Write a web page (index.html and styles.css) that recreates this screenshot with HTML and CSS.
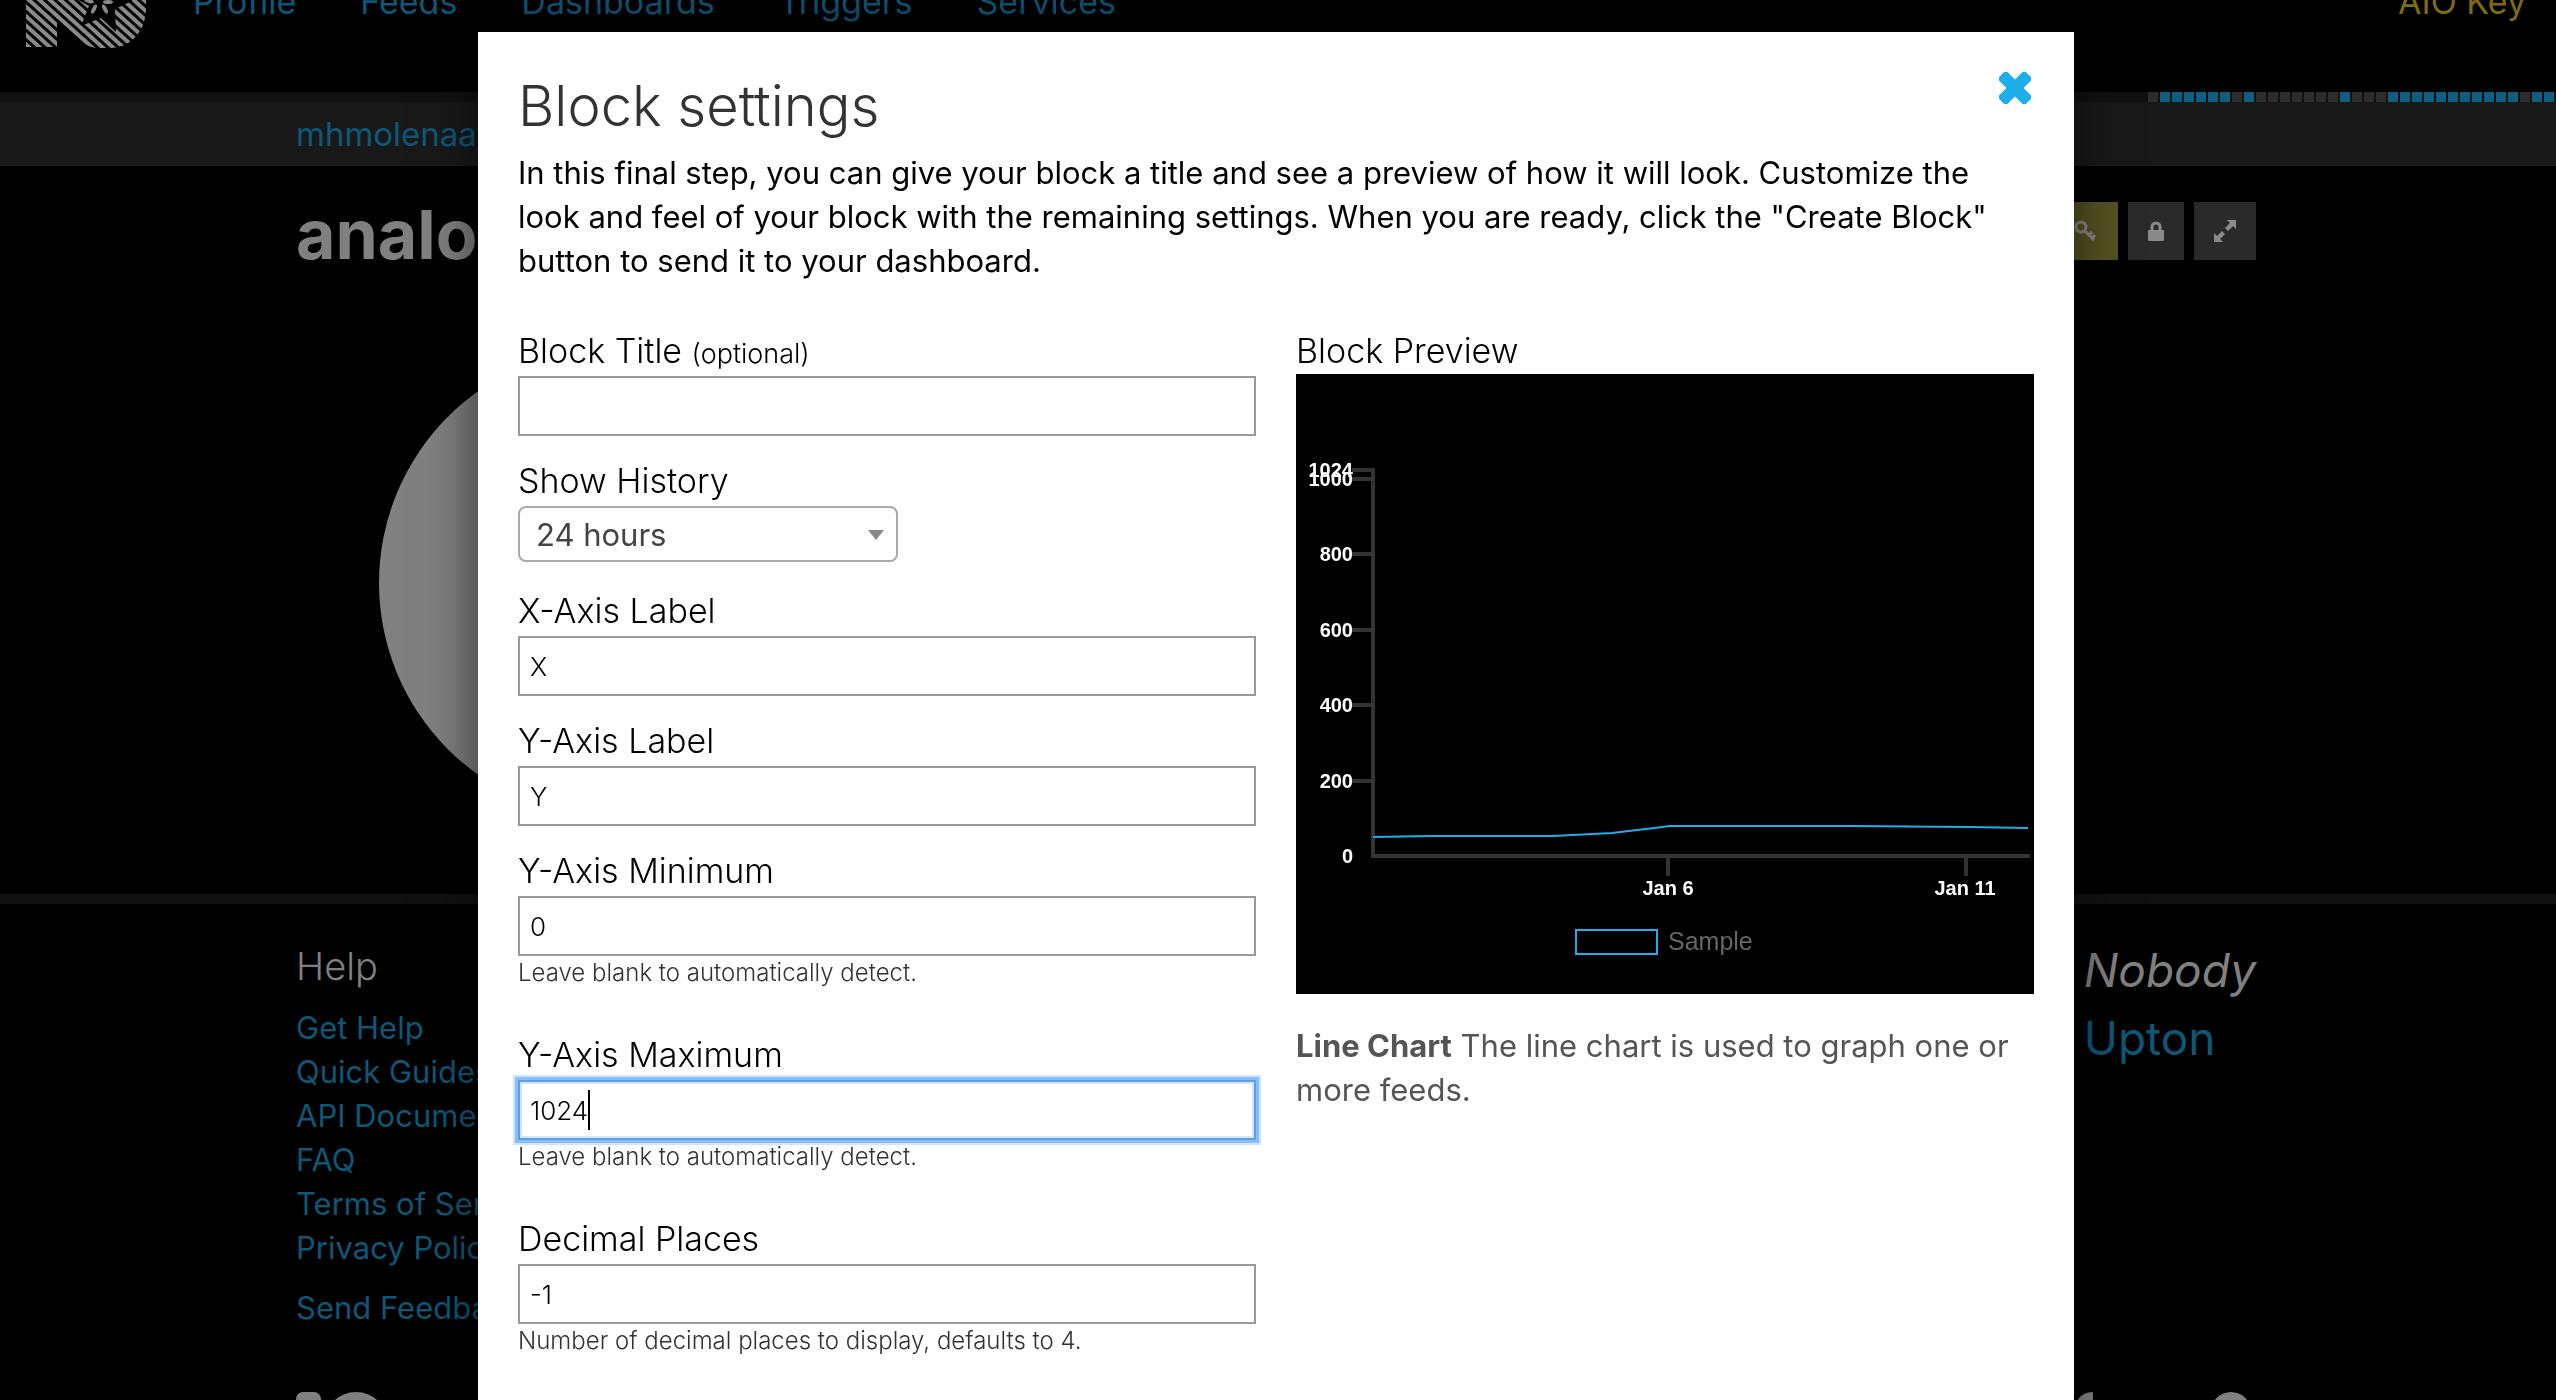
FILE: index.html
```html
<!DOCTYPE html>
<html lang="en">
<head>
<meta charset="utf-8">
<title>Block settings</title>
<link rel="stylesheet" href="styles.css">
</head>
<body>
<div class="page">
  <header class="site-header">
    <a class="logo" href="#" aria-label="Home">
      <svg width="120" height="68" viewBox="0 -20 120 68">
        <defs>
          <pattern id="stripes" width="7" height="7" patternUnits="userSpaceOnUse" patternTransform="rotate(-48)">
            <rect width="4" height="7" fill="#8a8a8a"/>
          </pattern>
        </defs>
        <path d="M0-20H120V8C120 32 104 48 84 48H73C66 48 60 45 56 42L31 19V47H0Z" fill="url(#stripes)"/>
        <path d="M40-20L46-4 63 6 55 26 75 18 90 32 89 9 106 1 102-20Z" fill="#000"/>
        <g fill="#8a8a8a">
          <ellipse cx="68" cy="9" rx="2" ry="5" transform="rotate(28 68 9)"/>
          <ellipse cx="79" cy="9" rx="2" ry="5" transform="rotate(-28 79 9)"/>
          <ellipse cx="82" cy="2" rx="5" ry="2"/>
          <ellipse cx="63" cy="1" rx="5" ry="2" transform="rotate(15 63 1)"/>
        </g>
      </svg>
    </a>
    <nav class="nav">
      <a href="#">Profile</a>
      <a href="#">Feeds</a>
      <a href="#">Dashboards</a>
      <a href="#">Triggers</a>
      <a href="#">Services</a>
    </nav>
    <a class="key-link" href="#">AIO Key</a>
  </header>

  <div class="activity">
    <svg width="408" height="10" viewBox="0 0 408 10" fill="none" stroke-width="10" stroke-dasharray="10 2">
      <path d="M0 5H408" stroke="#2d2d2d"/>
      <path d="M12 5h70M96 5h10M192 5h10M240 5h130M384 5h22" stroke="#0f5d80"/>
    </svg>
  </div>
  <div class="crumbs"><a href="#">mhmolenaar</a></div>

  <main class="dashboard">
    <div class="dashboard-head">
      <h1>analog</h1>
      <div class="tools">
        <button class="tool tool-key" type="button" aria-label="Key">
          <svg width="24" height="24" viewBox="0 0 24 24" fill="none" stroke="#8a8a8a" stroke-width="3"><circle cx="8" cy="8" r="5"/><path d="M11 11L21 21M16 16l3-3M19 19l3-3"/></svg>
        </button>
        <button class="tool tool-lock" type="button" aria-label="Lock">
          <svg width="16" height="20" viewBox="0 0 16 20"><path d="M4 9V6a4 4 0 0 1 8 0v3" fill="none" stroke="#8a8a8a" stroke-width="3"/><rect y="9" width="16" height="11" rx="1" fill="#8a8a8a"/></svg>
        </button>
        <button class="tool tool-expand" type="button" aria-label="Full screen">
          <svg width="22" height="22" viewBox="0 0 22 22"><path d="M13 0h9v9l-3-3-5 5-3-3 5-5zM9 22H0v-9l3 3 5-5 3 3-5 5z" fill="#8a8a8a"/></svg>
        </button>
      </div>
    </div>
    <div class="gauge"></div>
  </main>

  <footer class="footer">
    <div class="footer-row">
      <section class="help">
        <h2>Help</h2>
        <ul>
          <li><a href="#">Get Help</a></li>
          <li><a href="#">Quick Guides</a></li>
          <li><a href="#">API Documentation</a></li>
          <li><a href="#">FAQ</a></li>
          <li><a href="#">Terms of Service</a></li>
          <li><a href="#">Privacy Policy</a></li>
          <li class="feedback"><a href="#">Send Feedback</a></li>
        </ul>
      </section>
      <section class="quote">
        <em>Nobody</em>
        <a href="#">Upton</a>
      </section>
    </div>
    <div class="footer-row footer-marks">
      <svg width="88" height="40" viewBox="0 0 88 40" fill="#808080"><rect width="25" height="40" rx="7"/><circle cx="60" cy="32" r="32"/></svg>
      <svg width="180" height="40" viewBox="0 0 180 40" fill="#808080"><path d="M0 12Q4 0 17 0V40H0Z"/><circle cx="155" cy="20" r="20"/></svg>
    </div>
  </footer>
</div>

<div class="overlay">
  <form class="modal" role="dialog" aria-labelledby="modal-title">
    <div class="modal-head">
      <h2 id="modal-title">Block settings</h2>
      <button class="close" type="button" aria-label="Close">
        <svg width="32" height="32" viewBox="0 0 32 32" fill="#1eaeea"><rect x="-3" y="10" width="38" height="12" rx="3" transform="rotate(45 16 16)"/><rect x="-3" y="10" width="38" height="12" rx="3" transform="rotate(-45 16 16)"/></svg>
      </button>
    </div>
    <p class="intro">In this final step, you can give your block a title and see a preview of how it will look. Customize the look and feel of your block with the remaining settings. When you are ready, click the "Create Block" button to send it to your dashboard.</p>

    <div class="columns">
      <div class="fields">
        <div class="field">
          <label for="title">Block Title <small>(optional)</small></label>
          <input id="title" type="text">
        </div>
        <div class="field">
          <label for="history">Show History</label>
          <div class="select">
            <select id="history"><option>24 hours</option></select>
          </div>
        </div>
        <div class="field">
          <label for="xlabel">X-Axis Label</label>
          <input id="xlabel" type="text" value="X">
        </div>
        <div class="field">
          <label for="ylabel">Y-Axis Label</label>
          <input id="ylabel" type="text" value="Y">
        </div>
        <div class="field">
          <label for="ymin">Y-Axis Minimum</label>
          <input id="ymin" type="text" value="0">
          <p class="hint">Leave blank to automatically detect.</p>
        </div>
        <div class="field">
          <label for="ymax">Y-Axis Maximum</label>
          <div class="active-box">
            <input id="ymax" class="active" type="text" value="1024">
            <span class="caret"></span>
          </div>
          <p class="hint">Leave blank to automatically detect.</p>
        </div>
        <div class="field">
          <label for="decimals">Decimal Places</label>
          <input id="decimals" type="text" value="-1">
          <p class="hint">Number of decimal places to display, defaults to 4.</p>
        </div>
      </div>

      <div class="preview">
        <h3>Block Preview</h3>
        <svg class="chart" viewBox="0 0 738 620" role="img" aria-label="Line chart preview">
          <path d="M56 96H77M56 105H77M56 180H77M56 256H77M56 331H77M56 407H77M77 94V484M75 482H734M372 484V502M670 484V502" fill="none" stroke="#333" stroke-width="4"/>
          <g class="ticks" text-anchor="end">
            <text x="57" y="103">1024</text>
            <text x="57" y="112">1000</text>
            <text x="57" y="187">800</text>
            <text x="57" y="263">600</text>
            <text x="57" y="338">400</text>
            <text x="57" y="414">200</text>
            <text x="57" y="489">0</text>
          </g>
          <g class="ticks" text-anchor="middle">
            <text x="372" y="521">Jan 6</text>
            <text x="669" y="521">Jan 11</text>
          </g>
          <path d="M77 463L137 462H257C280 461 300 460 316 459L374 452H556L673 453 732 454" fill="none" stroke="#1eaeea" stroke-width="2"/>
          <rect x="280" y="556" width="81" height="24" fill="none" stroke="#1eaeea" stroke-width="2"/>
          <text class="legend" x="372" y="576">Sample</text>
        </svg>
        <p class="about"><strong>Line Chart</strong> The line chart is used to graph one or more feeds.</p>
      </div>
    </div>
  </form>
</div>
</body>
</html>
```
FILE: styles.css
```css
* { box-sizing: border-box; }

html, body { height: 100%; }

body {
  margin: 0;
  overflow: hidden;
  background: #000;
  font: 400 31px/44px Inter, "Liberation Sans", sans-serif;
}

h1, h2, h3, p, ul { margin: 0; padding: 0; }
ul { list-style: none; }
a { color: #0e5777; text-decoration: none; }
svg { display: block; }
button { border: 0; padding: 0; background: none; }

/* Page behind the dialog, already dimmed */
.page { color: #808080; }

.site-header {
  display: flex;
  align-items: flex-start;
  height: 112px;
  margin-top: -20px;
  padding: 0 30px 0 26px;
  font-size: 34px;
}
.nav { display: flex; gap: 64px; margin-left: 47px; }
.key-link { margin-left: auto; color: #7f6b14; }

.activity { display: flex; justify-content: flex-end; background: #111; }

.crumbs {
  padding: 10px 296px;
  background: #191919;
  font-size: 33px;
}

.dashboard { padding: 36px 300px 0 296px; }
.dashboard-head { display: flex; justify-content: space-between; }
.dashboard h1 { font-size: 68px; line-height: 64px; }
.tools { display: flex; gap: 10px; height: 58px; }
.tool {
  display: flex;
  align-items: center;
  justify-content: center;
  background: #2a2a2a;
}
.tool-key { width: 66px; background: #555323; }
.tool-lock { width: 56px; }
.tool-expand { width: 62px; }

.gauge {
  width: 470px;
  height: 470px;
  margin: 82px 0 76px 83px;
  border-radius: 50%;
  background: #808080;
}

.footer { padding: 32px 300px 0 296px; border-top: 10px solid #111; }
.footer-row { display: flex; justify-content: space-between; }
.help h2 {
  margin: 8px 0 18px;
  font-size: 38px;
  font-weight: 300;
  line-height: 44px;
}
.feedback { margin-top: 16px; }
.quote { display: flex; flex-direction: column; font-size: 46px; line-height: 68px; }
.footer-marks { margin-top: 62px; }

/* Dialog */
.overlay {
  position: fixed;
  inset: 0;
  display: flex;
  justify-content: center;
  padding: 32px 4px 0 0;
  overflow: hidden;
}
.modal {
  width: 1596px;
  max-width: 94%;
  height: max-content;
  min-height: 100%;
  padding: 40px;
  background: #fff;
  color: #000;
  box-shadow: 0 0 50px rgba(0, 0, 0, 0.6);
}
.modal-head { display: flex; justify-content: space-between; }
.modal-head h2 {
  font-size: 56px;
  font-weight: 300;
  line-height: 68px;
  color: #333;
}
.close { align-self: flex-start; margin-right: 3px; }
.intro { margin: 11px 0 45px; }

.columns {
  display: grid;
  grid-template-columns: 1fr 1fr;
  gap: 40px;
  align-items: start;
}
.fields { display: grid; gap: 22px; }

label, h3 {
  display: block;
  font-size: 34px;
  font-weight: 300;
  line-height: 46px;
}
label { margin-bottom: 2px; }
small { font-size: 27px; line-height: 1; }

input {
  display: block;
  width: 100%;
  height: 60px;
  padding: 0 10px;
  border: 2px solid #999;
  border-radius: 0;
  background: #fff;
  color: #000;
  font: 300 26px Inter, "Liberation Sans", sans-serif;
}
.active-box { position: relative; }
.active {
  border-color: #5f9ee0;
  box-shadow: 0 0 0 3px #86bffa, 0 0 0 5px #cfe5fb, inset 0 0 0 2px #cfe5fb;
}
.caret {
  position: absolute;
  top: 10px;
  left: 70px;
  width: 2px;
  height: 40px;
  background: #000;
}

.select { position: relative; width: 380px; margin-bottom: 4px; }
.select::after {
  content: "";
  position: absolute;
  top: 24px;
  right: 14px;
  border: solid transparent;
  border-width: 10px 8px 0;
  border-top-color: #888;
  pointer-events: none;
}
select {
  display: block;
  width: 100%;
  height: 56px;
  padding: 0 16px;
  border: 2px solid #aaa;
  border-radius: 8px;
  appearance: none;
  background: #fff;
  color: #444;
  font: 400 31px Inter, "Liberation Sans", sans-serif;
}

.hint {
  padding-bottom: 20px;
  color: #333;
  font-size: 24px;
  font-weight: 300;
  line-height: 34px;
}

.chart { width: 100%; background: #000; }
.ticks, .legend { font-family: "Liberation Sans", Arial, sans-serif; }
.ticks { fill: #fff; font-size: 20px; font-weight: 700; }
.legend { fill: #666; font-size: 25px; }
.about { margin-top: 30px; color: #555; }
```
